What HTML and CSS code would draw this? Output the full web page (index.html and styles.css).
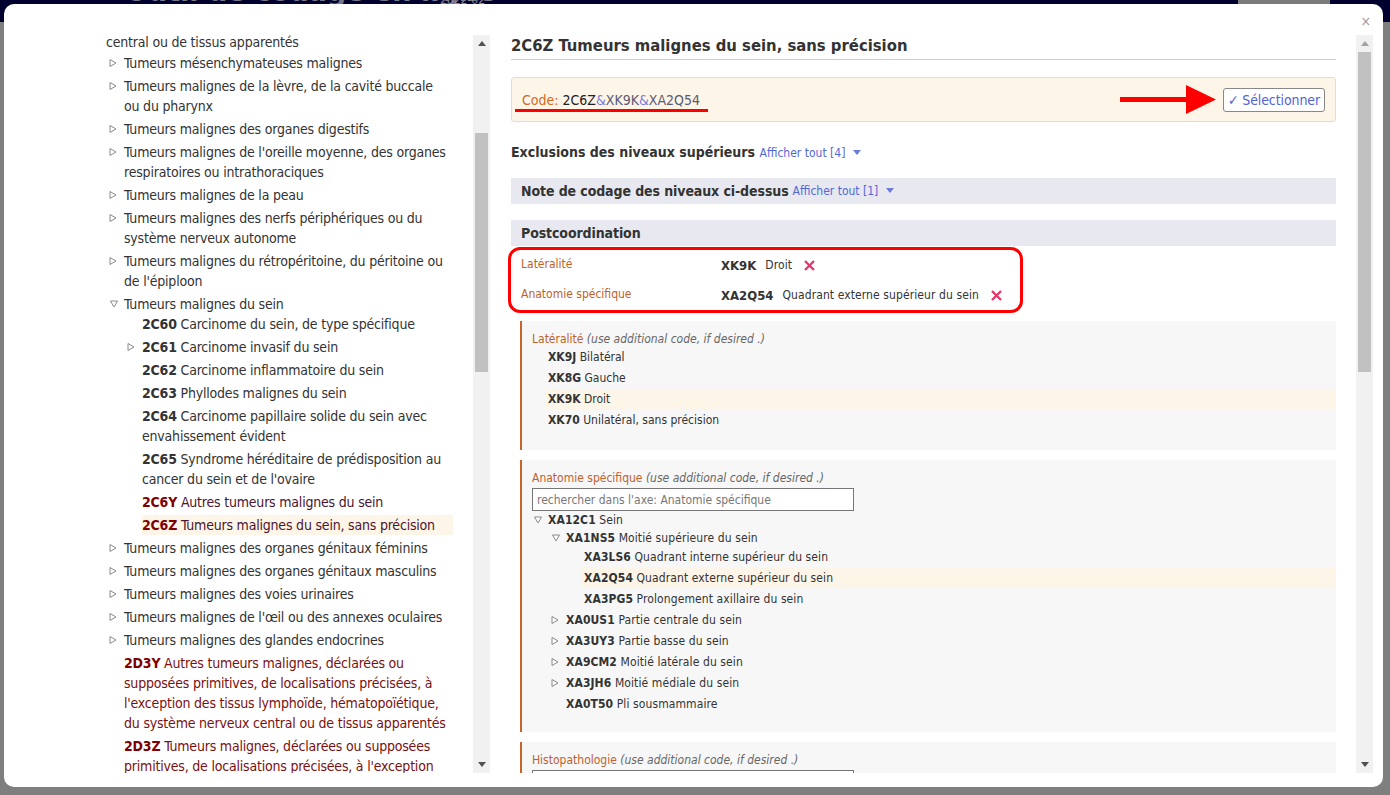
FILE: index.html
```html
<!DOCTYPE html>
<html lang="fr">
<head>
<meta charset="utf-8">
<title>CIM-11 Outil de codage</title>
<link rel="stylesheet" href="styles.css">
</head>
<body>
<div class="page-header">
  <span class="ph-title">Outil de codage en ligne</span>
  <span class="ph-date">2022-02</span>
  <div class="ph-box"></div>
</div>

<div class="modal">
  <span class="close">×</span>
  <div class="modal-body">

    <!-- LEFT PANE -->
    <div class="pane-left">
      <div class="lc">
        <div class="lc-inner">
          <div class="cont-line">central ou de tissus apparentés</div>
          <div class="ti"><span class="tog"><svg class="tri-r" width="8" height="10" viewBox="0 0 8 10"><path d="M1 1.5 L7 5 L1 8.5 Z"/></svg></span><span class="txt">Tumeurs mésenchymateuses malignes</span></div>
          <div class="ti"><span class="tog"><svg class="tri-r" width="8" height="10" viewBox="0 0 8 10"><path d="M1 1.5 L7 5 L1 8.5 Z"/></svg></span><span class="txt">Tumeurs malignes de la lèvre, de la cavité buccale ou du pharynx</span></div>
          <div class="ti"><span class="tog"><svg class="tri-r" width="8" height="10" viewBox="0 0 8 10"><path d="M1 1.5 L7 5 L1 8.5 Z"/></svg></span><span class="txt">Tumeurs malignes des organes digestifs</span></div>
          <div class="ti"><span class="tog"><svg class="tri-r" width="8" height="10" viewBox="0 0 8 10"><path d="M1 1.5 L7 5 L1 8.5 Z"/></svg></span><span class="txt">Tumeurs malignes de l'oreille moyenne, des organes respiratoires ou intrathoraciques</span></div>
          <div class="ti"><span class="tog"><svg class="tri-r" width="8" height="10" viewBox="0 0 8 10"><path d="M1 1.5 L7 5 L1 8.5 Z"/></svg></span><span class="txt">Tumeurs malignes de la peau</span></div>
          <div class="ti"><span class="tog"><svg class="tri-r" width="8" height="10" viewBox="0 0 8 10"><path d="M1 1.5 L7 5 L1 8.5 Z"/></svg></span><span class="txt">Tumeurs malignes des nerfs périphériques ou du système nerveux autonome</span></div>
          <div class="ti"><span class="tog"><svg class="tri-r" width="8" height="10" viewBox="0 0 8 10"><path d="M1 1.5 L7 5 L1 8.5 Z"/></svg></span><span class="txt">Tumeurs malignes du rétropéritoine, du péritoine ou de l'épiploon</span></div>
          <div class="tgroup">
            <div class="ti ti-open"><span class="tog"><svg class="tri-d" width="10" height="8" viewBox="0 0 10 8"><path d="M1.5 1 L8.5 1 L5 7 Z"/></svg></span><span class="txt">Tumeurs malignes du sein</span></div>
            <div class="children">
              <div class="ti"><span class="tog"></span><span class="txt"><b>2C60</b> Carcinome du sein, de type spécifique</span></div>
              <div class="ti"><span class="tog"><svg class="tri-r" width="8" height="10" viewBox="0 0 8 10"><path d="M1 1.5 L7 5 L1 8.5 Z"/></svg></span><span class="txt"><b>2C61</b> Carcinome invasif du sein</span></div>
              <div class="ti"><span class="tog"></span><span class="txt"><b>2C62</b> Carcinome inflammatoire du sein</span></div>
              <div class="ti"><span class="tog"></span><span class="txt"><b>2C63</b> Phyllodes malignes du sein</span></div>
              <div class="ti"><span class="tog"></span><span class="txt"><b>2C64</b> Carcinome papillaire solide du sein avec envahissement évident</span></div>
              <div class="ti"><span class="tog"></span><span class="txt"><b>2C65</b> Syndrome héréditaire de prédisposition au cancer du sein et de l'ovaire</span></div>
              <div class="ti red-sib"><span class="tog"></span><span class="txt"><b>2C6Y</b> Autres tumeurs malignes du sein</span></div>
              <div class="ti red-sib"><span class="tog"></span><span class="txt sel"><b>2C6Z</b> Tumeurs malignes du sein, sans précision</span></div>
            </div>
          </div>
          <div class="ti"><span class="tog"><svg class="tri-r" width="8" height="10" viewBox="0 0 8 10"><path d="M1 1.5 L7 5 L1 8.5 Z"/></svg></span><span class="txt">Tumeurs malignes des organes génitaux féminins</span></div>
          <div class="ti"><span class="tog"><svg class="tri-r" width="8" height="10" viewBox="0 0 8 10"><path d="M1 1.5 L7 5 L1 8.5 Z"/></svg></span><span class="txt">Tumeurs malignes des organes génitaux masculins</span></div>
          <div class="ti"><span class="tog"><svg class="tri-r" width="8" height="10" viewBox="0 0 8 10"><path d="M1 1.5 L7 5 L1 8.5 Z"/></svg></span><span class="txt">Tumeurs malignes des voies urinaires</span></div>
          <div class="ti"><span class="tog"><svg class="tri-r" width="8" height="10" viewBox="0 0 8 10"><path d="M1 1.5 L7 5 L1 8.5 Z"/></svg></span><span class="txt">Tumeurs malignes de l'œil ou des annexes oculaires</span></div>
          <div class="ti"><span class="tog"><svg class="tri-r" width="8" height="10" viewBox="0 0 8 10"><path d="M1 1.5 L7 5 L1 8.5 Z"/></svg></span><span class="txt">Tumeurs malignes des glandes endocrines</span></div>
          <div class="ti red-other"><span class="tog"></span><span class="txt"><b>2D3Y</b> Autres tumeurs malignes, déclarées ou supposées primitives, de localisations précisées, à l'exception des tissus lymphoïde, hématopoïétique, du système nerveux central ou de tissus apparentés</span></div>
          <div class="ti red-other"><span class="tog"></span><span class="txt"><b>2D3Z</b> Tumeurs malignes, déclarées ou supposées primitives, de localisations précisées, à l'exception des tissus lymphoïde, hématopoïétique, du système nerveux central ou de tissus apparentés, sans précision</span></div>
        </div>
      </div>
      <div class="sbar">
        <div class="sb-btn"><svg width="8" height="5" viewBox="0 0 8 5"><path d="M0 5 L4 0 L8 5 Z" fill="#505050"/></svg></div>
        <div class="sb-track"><div class="sb-thumb thumb-left"></div></div>
        <div class="sb-btn"><svg width="8" height="5" viewBox="0 0 8 5"><path d="M0 0 L8 0 L4 5 Z" fill="#505050"/></svg></div>
      </div>
    </div>

    <!-- RIGHT PANE -->
    <div class="pane-right">
      <div class="rc">
        <div class="rc-inner">
          <h2 class="title">2C6Z Tumeurs malignes du sein, sans précision</h2>

          <div class="codebox">
            <div class="code-line"><span class="code-lbl">Code:</span> <span class="code-main">2C6Z</span><span class="amp">&amp;</span><span class="code-ext">XK9K</span><span class="amp">&amp;</span><span class="code-ext">XA2Q54</span></div>
            <button class="btn-select">✓ Sélectionner</button>
          </div>

          <div class="excl"><span class="sec-bold">Exclusions des niveaux supérieurs</span> <span class="showall">Afficher tout [4] <svg width="8" height="5" viewBox="0 0 8 5"><path d="M0 0 L8 0 L4 5 Z" fill="#6a7ad8"/></svg></span></div>

          <div class="band band-note"><span class="sec-bold">Note de codage des niveaux ci-dessus</span> <span class="showall">Afficher tout [1] <svg width="8" height="5" viewBox="0 0 8 5"><path d="M0 0 L8 0 L4 5 Z" fill="#6a7ad8"/></svg></span></div>

          <div class="band band-post"><span class="sec-bold">Postcoordination</span></div>

          <div class="pc-rows">
            <div class="pc-row"><span class="pc-lbl">Latéralité</span><span class="pc-val"><b>XK9K</b><span class="pc-text">Droit</span><svg class="xdel" width="11" height="11" viewBox="0 0 11 11"><path d="M1 1 L10 10 M10 1 L1 10"/></svg></span></div>
            <div class="pc-row"><span class="pc-lbl">Anatomie spécifique</span><span class="pc-val"><b>XA2Q54</b><span class="pc-text">Quadrant externe supérieur du sein</span><svg class="xdel" width="11" height="11" viewBox="0 0 11 11"><path d="M1 1 L10 10 M10 1 L1 10"/></svg></span></div>
          </div>

          <div class="axis axis-lat">
            <div class="axis-title">Latéralité <i>(use additional code, if desired .)</i></div>
            <div class="ax-item"><span class="ax-lab"><b>XK9J</b> Bilatéral</span></div>
            <div class="ax-item"><span class="ax-lab"><b>XK8G</b> Gauche</span></div>
            <div class="ax-item"><span class="ax-lab hl"><b>XK9K</b> Droit</span></div>
            <div class="ax-item"><span class="ax-lab"><b>XK70</b> Unilatéral, sans précision</span></div>
          </div>

          <div class="axis axis-anat">
            <div class="axis-title">Anatomie spécifique <i>(use additional code, if desired .)</i></div>
            <input class="axis-search" type="text" placeholder="rechercher dans l'axe: Anatomie spécifique">
            <div class="node n0 tight"><span class="ntog"><svg class="tri-d" width="10" height="8" viewBox="0 0 10 8"><path d="M1.5 1 L8.5 1 L5 7 Z"/></svg></span><span class="nlab"><b>XA12C1</b> Sein</span></div>
            <div class="node n1 tight2"><span class="ntog"><svg class="tri-d" width="10" height="8" viewBox="0 0 10 8"><path d="M1.5 1 L8.5 1 L5 7 Z"/></svg></span><span class="nlab"><b>XA1NS5</b> Moitié supérieure du sein</span></div>
            <div class="node n2"><span class="ntog"></span><span class="nlab"><b>XA3LS6</b> Quadrant interne supérieur du sein</span></div>
            <div class="node n2"><span class="ntog"></span><span class="nlab hl"><b>XA2Q54</b> Quadrant externe supérieur du sein</span></div>
            <div class="node n2"><span class="ntog"></span><span class="nlab"><b>XA3PG5</b> Prolongement axillaire du sein</span></div>
            <div class="node n1"><span class="ntog"><svg class="tri-r" width="8" height="10" viewBox="0 0 8 10"><path d="M1 1.5 L7 5 L1 8.5 Z"/></svg></span><span class="nlab"><b>XA0US1</b> Partie centrale du sein</span></div>
            <div class="node n1"><span class="ntog"><svg class="tri-r" width="8" height="10" viewBox="0 0 8 10"><path d="M1 1.5 L7 5 L1 8.5 Z"/></svg></span><span class="nlab"><b>XA3UY3</b> Partie basse du sein</span></div>
            <div class="node n1"><span class="ntog"><svg class="tri-r" width="8" height="10" viewBox="0 0 8 10"><path d="M1 1.5 L7 5 L1 8.5 Z"/></svg></span><span class="nlab"><b>XA9CM2</b> Moitié latérale du sein</span></div>
            <div class="node n1"><span class="ntog"><svg class="tri-r" width="8" height="10" viewBox="0 0 8 10"><path d="M1 1.5 L7 5 L1 8.5 Z"/></svg></span><span class="nlab"><b>XA3JH6</b> Moitié médiale du sein</span></div>
            <div class="node n1"><span class="ntog"></span><span class="nlab"><b>XA0T50</b> Pli sousmammaire</span></div>
          </div>

          <div class="axis axis-histo">
            <div class="axis-title">Histopathologie <i>(use additional code, if desired .)</i></div>
            <input class="axis-search" type="text" placeholder="">
          </div>

          <!-- annotations drawn over the content -->
          <div class="anno-underline"></div>
          <svg class="anno-arrow" width="96" height="29" viewBox="0 0 96 29"><rect x="0" y="12" width="70" height="5" fill="#ff0000"/><path d="M66 0 L96 14.5 L66 29 Z" fill="#ff0000"/></svg>
          <div class="anno-box"></div>
        </div>
      </div>
      <div class="sbar">
        <div class="sb-btn"><svg width="8" height="5" viewBox="0 0 8 5"><path d="M0 5 L4 0 L8 5 Z" fill="#a3a3a3"/></svg></div>
        <div class="sb-track"><div class="sb-thumb thumb-right"></div></div>
        <div class="sb-btn"><svg width="8" height="5" viewBox="0 0 8 5"><path d="M0 0 L8 0 L4 5 Z" fill="#505050"/></svg></div>
      </div>
    </div>

  </div>
</div>
</body>
</html>
```

FILE: styles.css
```css
* { box-sizing: border-box; }
html, body { margin: 0; padding: 0; }
body {
  width: 1390px;
  height: 795px;
  overflow: hidden;
  position: relative;
  background: #7f7f7f;
  font-family: Tahoma, "DejaVu Sans Condensed", "DejaVu Sans", sans-serif;
  font-stretch: condensed;
  color: #333;
}

/* dimmed page header behind the dialog */
.page-header {
  height: 22px;
  background: #00002e;
  position: relative;
  overflow: hidden;
}
.ph-title {
  position: absolute;
  left: 125px;
  top: -27px;
  font-size: 30px;
  font-weight: bold;
  color: #77778a;
  white-space: nowrap;
}
.ph-date {
  position: absolute;
  left: 440px;
  top: -7px;
  font-size: 12px;
  color: #8a8a9a;
}
.ph-box {
  position: absolute;
  left: 1238px;
  top: 0;
  width: 92px;
  height: 22px;
  background: #7b7b7b;
}

/* dialog */
.modal {
  position: absolute;
  left: 4px;
  top: 4px;
  width: 1379px;
  height: 783px;
  background: #fff;
  border-radius: 10px;
}
.close {
  position: absolute;
  right: 12px;
  top: 9px;
  font-size: 14px;
  color: #999;
  line-height: 16px;
}
.modal-body {
  display: flex;
  height: 100%;
  padding: 31px 10px 14px 102px;
}

/* scrollbars */
.sbar {
  width: 17px;
  flex: none;
  background: #f1f1f1;
  display: flex;
  flex-direction: column;
}
.sb-btn {
  height: 17px;
  display: flex;
  align-items: center;
  justify-content: center;
  flex: none;
}
.sb-track { flex: 1; padding: 0 2px; }
.sb-thumb { background: #c1c1c1; }
.thumb-left { margin-top: 81px; height: 239px; }
.thumb-right { margin-top: 0; height: 320px; }

/* left pane */
.pane-left {
  width: 384px;
  flex: none;
  display: flex;
  gap: 20px;
}
.lc {
  width: 347px;
  flex: none;
  overflow: hidden;
}
.lc-inner {
  margin-top: -3px;
  font-size: 14px;
  line-height: 20px;
  letter-spacing: -0.2px;
  color: #333;
}
.cont-line { margin-bottom: 1px; }
.ti {
  display: flex;
  margin-bottom: 3px;
}
.tgroup { margin-bottom: 3px; }
.ti-open { margin-bottom: 0; }
.tog {
  width: 18px;
  height: 20px;
  flex: none;
  display: flex;
  align-items: center;
  padding-left: 3px;
}
.txt { flex: 1; padding-right: 4px; }
.txt b { color: #333; }
.children { padding-left: 18px; }
.tri-r path, .tri-d path {
  fill: #fff;
  stroke: #8a8a8a;
  stroke-width: 1;
}
.red-sib b { color: #800000; }
.red-sib .txt { color: #4a1530; }
.red-other b { color: #800000; }
.red-other .txt { color: #7a1010; }
.sel { background: #fdf5e8; }

/* right pane */
.pane-right {
  margin-left: 18px;
  display: flex;
  gap: 20px;
  flex: none;
}
.rc {
  width: 828px;
  flex: none;
  overflow: hidden;
  padding-left: 3px;
}
.rc-inner {
  position: relative;
  width: 825px;
}
.title {
  margin: 0;
  font-size: 16.5px;
  font-weight: bold;
  line-height: 22px;
  padding-bottom: 2px;
  border-bottom: 1px solid #cfcfcf;
  color: #333;
}
.codebox {
  margin-top: 17px;
  height: 45px;
  background: #fdf5e8;
  border: 1px solid #ddd;
  border-radius: 3px;
  display: flex;
  align-items: center;
  justify-content: space-between;
  padding: 0 10px;
}
.code-line { font-size: 14px; }
.code-lbl { color: #d2691e; }
.code-main { color: #222; }
.amp { color: #7b7bdc; }
.code-ext { color: #5a5a72; }
.btn-select {
  height: 24px;
  padding: 0 4px;
  border: 1px solid #888;
  border-radius: 3px;
  background: #fff;
  color: #5363d3;
  font-family: inherit;
  font-stretch: condensed;
  font-size: 14px;
  letter-spacing: -0.1px;
}
.sec-bold {
  font-size: 14px;
  font-weight: bold;
  color: #333;
}
.band .sec-bold { letter-spacing: -0.1px; }
.showall {
  font-size: 12px;
  color: #5468d4;
  margin-left: 0;
}
.showall svg { margin-left: 4px; vertical-align: 2px; }
.excl {
  margin-top: 20px;
  line-height: 20px;
}
.band {
  height: 26px;
  background: #e7e8f0;
  padding-left: 10px;
  display: flex;
  align-items: center;
}
.band .showall { margin-left: 4px; }
.band-note { margin-top: 15px; }
.band-post { margin-top: 16px; }

.pc-rows { padding: 4px 0 3px; }
.pc-row {
  height: 30px;
  display: flex;
  align-items: center;
  padding-left: 10px;
  font-size: 12px;
}
.pc-lbl {
  width: 200px;
  flex: none;
  color: #c0612b;
  margin-top: -3px;
}
.pc-val { display: flex; align-items: center; }
.pc-val b { font-size: 13px; color: #333; }
.pc-text { margin-left: 9px; color: #333; letter-spacing: 0.1px; }
.xdel { margin-left: 12px; }
.xdel path { stroke: #e8336a; stroke-width: 2.3; fill: none; }

.axis {
  margin-left: 9px;
  background: #f7f7f7;
  border-left: 2px solid #c8652a;
  padding-left: 10px;
  font-size: 12px;
}
.axis-title {
  line-height: 16px;
  color: #c0612b;
}
.axis-title i { color: #666; }
.axis-lat {
  margin-top: 8px;
  padding-top: 10px;
  padding-bottom: 19px;
}
.ax-item {
  line-height: 21px;
  padding-left: 13px;
}
.ax-lab { display: block; padding-left: 3px; color: #333; }
.hl { background: #fdf5e8; }

.axis-anat {
  margin-top: 10px;
  padding-top: 10px;
  padding-bottom: 18px;
}
.axis-search {
  display: block;
  margin-top: 2px;
  width: 322px;
  height: 23px;
  border: 1px solid #767676;
  background: #fff;
  padding: 0 4px;
  font-family: inherit;
  font-stretch: condensed;
  font-size: 12px;
  color: #333;
}
.axis-search::placeholder { color: #777; }
.node {
  display: flex;
  align-items: center;
  height: 21px;
}
.node.tight { height: 18px; }
.node.tight2 { height: 17px; }
.n0 { padding-left: 0; }
.n1 { padding-left: 18px; }
.n2 { padding-left: 36px; }
.ntog {
  width: 16px;
  flex: none;
  display: flex;
  align-items: center;
  padding-left: 1px;
}
.nlab {
  flex: 1;
  align-self: stretch;
  display: flex;
  align-items: center;
  margin-left: -2px;
  padding-left: 2px;
  color: #333;
  white-space: pre;
  letter-spacing: 0.1px;
}
.axis-histo {
  margin-top: 10px;
  padding-top: 10px;
  height: 60px;
}

/* annotations */
.anno-underline {
  position: absolute;
  left: 4px;
  top: 74px;
  width: 193px;
  height: 3px;
  background: #ff0000;
}
.anno-arrow {
  position: absolute;
  left: 609px;
  top: 50px;
}
.anno-box {
  position: absolute;
  left: -3px;
  top: 212px;
  width: 515px;
  height: 66px;
  border: 3px solid #ff0000;
  border-radius: 12px;
}
```
